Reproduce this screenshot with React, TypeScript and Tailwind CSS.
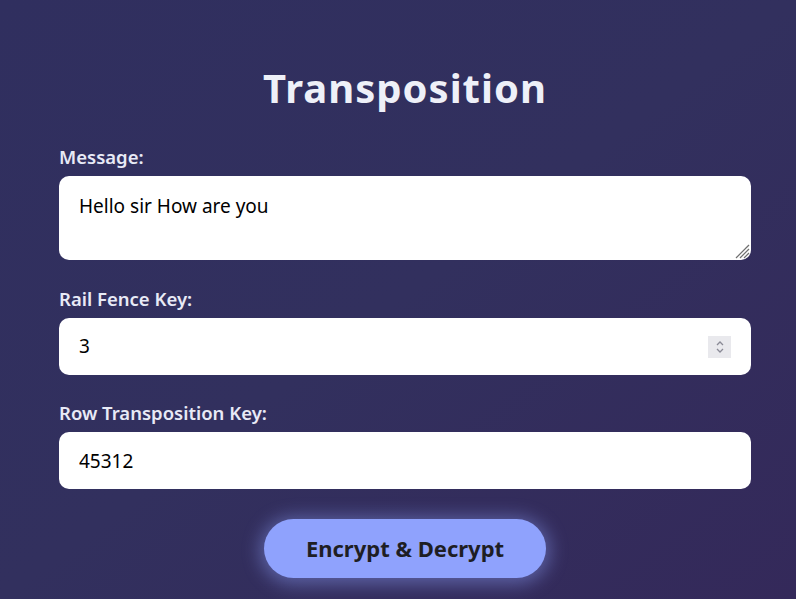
import { useState } from "react";

const FONT = { fontFamily: '"Noto Sans", "Open Sans", sans-serif' };

function Spinner() {
  return (
    <div className="flex h-[22px] w-[23px] flex-col items-center justify-center bg-[#e9e9ed]">
      <svg width="10" height="16" viewBox="0 0 10 16" fill="none" stroke="#8a8a96" strokeWidth="1.3">
        <path d="M2 6 L5 3 L8 6" />
        <path d="M2 10 L5 13 L8 10" />
      </svg>
    </div>
  );
}

function ResizeGrip() {
  return (
    <svg
      className="pointer-events-none absolute right-[1px] bottom-[1px]"
      width="18"
      height="18"
      viewBox="0 0 18 18"
      fill="none"
      stroke="#6f6f6f"
      strokeWidth="1.2"
    >
      <path d="M17 4 L4 17" />
      <path d="M17 8 L8 17" />
      <path d="M17 12 L12 17" />
    </svg>
  );
}

export default function App() {
  const [message, setMessage] = useState("Hello sir How are you");
  const [rail, setRail] = useState("3");
  const [rowKey, setRowKey] = useState("45312");

  return (
    <div
      className="min-h-[599px] w-full bg-gradient-to-br from-[#302f5f] via-[#32305e] to-[#34295a]"
      style={FONT}
    >
      <div className="ml-[59px] flex w-[692px] flex-col pt-[62px]">
        <h1 className="text-center text-[40px] font-bold leading-[52px] tracking-[1px] text-[#eef0f8]">
          Transposition
        </h1>

        <label className="mt-[31px] mb-[7px] text-[18.5px] font-semibold leading-[24px] text-[#e8eaf6]">
          Message:
        </label>
        <div className="relative h-[84px] w-full">
          <textarea
            value={message}
            onChange={(e) => setMessage(e.target.value)}
            className="h-full w-full resize-none rounded-[10px] bg-white px-[20px] py-[18px] text-[19px] leading-[24px] text-black outline-none"
          />
          <ResizeGrip />
        </div>

        <label className="mt-[27px] mb-[7px] text-[18.5px] font-semibold leading-[24px] text-[#e8eaf6]">
          Rail Fence Key:
        </label>
        <div className="flex h-[57px] w-full items-center rounded-[10px] bg-white pl-[20px] pr-[20px]">
          <input
            value={rail}
            onChange={(e) => setRail(e.target.value)}
            className="flex-1 bg-transparent text-[19px] text-black outline-none"
          />
          <Spinner />
        </div>

        <label className="mt-[26px] mb-[7px] text-[18.5px] font-semibold leading-[24px] text-[#e8eaf6]">
          Row Transposition Key:
        </label>
        <input
          value={rowKey}
          onChange={(e) => setRowKey(e.target.value)}
          className="h-[57px] w-full rounded-[10px] bg-white px-[20px] text-[19px] text-black outline-none"
        />

        <button className="mx-auto mt-[30px] h-[59px] w-[282px] rounded-full bg-[#8fa2fd] text-[22px] font-bold text-[#1e1e24] shadow-[0_2px_18px_4px_rgba(143,162,253,0.45)]">
          Encrypt &amp; Decrypt
        </button>
      </div>
    </div>
  );
}
